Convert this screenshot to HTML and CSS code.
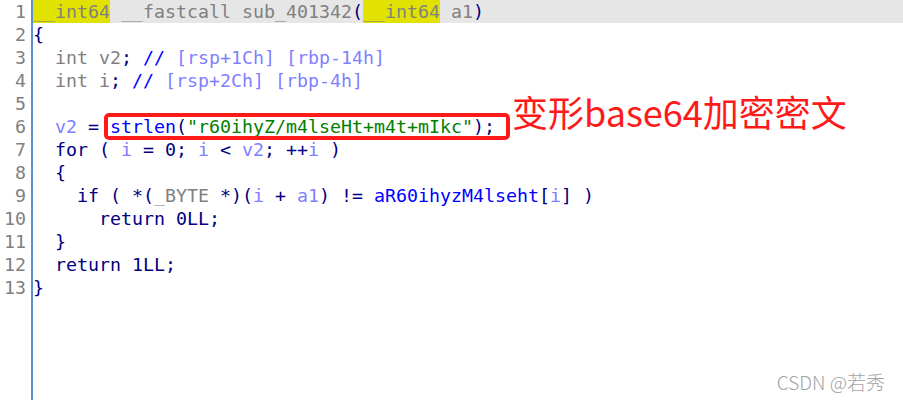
FILE: index.html
```html
<!DOCTYPE html>
<html lang="zh">
<head>
<meta charset="utf-8">
<title>sub_401342</title>
<link rel="stylesheet" href="styles.css">
</head>
<body>
<div class="editor">
  <div class="gutter">
    <div>1</div><div>2</div><div>3</div><div>4</div><div>5</div><div>6</div><div>7</div><div>8</div><div>9</div><div>10</div><div>11</div><div>12</div><div>13</div>
  </div>
  <div class="code">
    <div class="row cur"><span class="g"><span class="hl">__int64</span> __fastcall sub_401342</span>(<span class="g"><span class="hl">__int64</span> a1</span>)</div>
    <div class="row">{</div>
    <div class="row">  <span class="g">int v2</span>; <span class="cm">//</span><span class="v"> [rsp+1Ch] [rbp-14h]</span></div>
    <div class="row">  <span class="g">int i</span>; <span class="cm">//</span><span class="v"> [rsp+2Ch] [rbp-4h]</span></div>
    <div class="row"> </div>
    <div class="row">  <span class="v">v2</span> = <span class="box"><span class="fn">strlen</span>(<span class="str">"r60ihyZ/m4lseHt+m4t+mIkc"</span>);</span></div>
    <div class="row">  for ( <span class="v">i</span> = 0; <span class="v">i</span> &lt; <span class="v">v2</span>; ++<span class="v">i</span> )</div>
    <div class="row">  {</div>
    <div class="row">    if ( *(<span class="g">_BYTE</span> *)(<span class="v">i</span> + <span class="v">a1</span>) != <span class="fn">aR60ihyzM4lseht</span>[<span class="v">i</span>] )</div>
    <div class="row">      return 0LL;</div>
    <div class="row">  }</div>
    <div class="row">  return 1LL;</div>
    <div class="row">}</div>
  </div>
  <div class="note">变形base64加密密文</div>
  <div class="wm">CSDN @若秀</div>
</div>
</body>
</html>
```

FILE: styles.css
```css
* { box-sizing: border-box; }
html, body { margin: 0; padding: 0; background: #ffffff; }
.editor {
  position: relative;
  display: flex;
  width: 903px;
  height: 400px;
  overflow: hidden;
  font-family: "DejaVu Sans Mono", "Liberation Mono", monospace;
  font-size: 18.27px;
  line-height: 23px;
  color: #000080;
}
.gutter {
  width: 33px;
  padding-right: 5px;
  border-right: 2px solid #5b8fcf;
  text-align: right;
  color: #808080;
}
.code { flex: 1; padding-left: 0; }
.row { height: 23px; white-space: pre; }
.row.cur { background: #e6e6e6; }
.hl { background: #e2e200; display: inline-block; height: 23px; vertical-align: top; }
.g { color: #808080; }
.cm { color: #0000ff; }
.v { color: #7f7fff; }
.fn { color: #0000ff; }
.str { color: #008000; }
.box { position: relative; }
.box::after {
  content: "";
  position: absolute;
  left: -6px;
  right: -15px;
  top: -3px;
  bottom: -3px;
  border: 4px solid #ff1a1a;
  border-radius: 5px;
}
.note {
  position: absolute;
  left: 512px;
  top: 91px;
  font-family: "Noto Sans CJK SC", "Noto Sans", sans-serif;
  font-size: 36px;
  line-height: 40px;
  color: #ff1a1a;
  white-space: nowrap;
}
.wm {
  position: absolute;
  right: 18px;
  bottom: 6px;
  font-family: "Noto Sans CJK SC", "Noto Sans", sans-serif;
  font-size: 19px;
  font-weight: 300;
  line-height: 24px;
  color: #a3a3a3;
  white-space: nowrap;
}
```
